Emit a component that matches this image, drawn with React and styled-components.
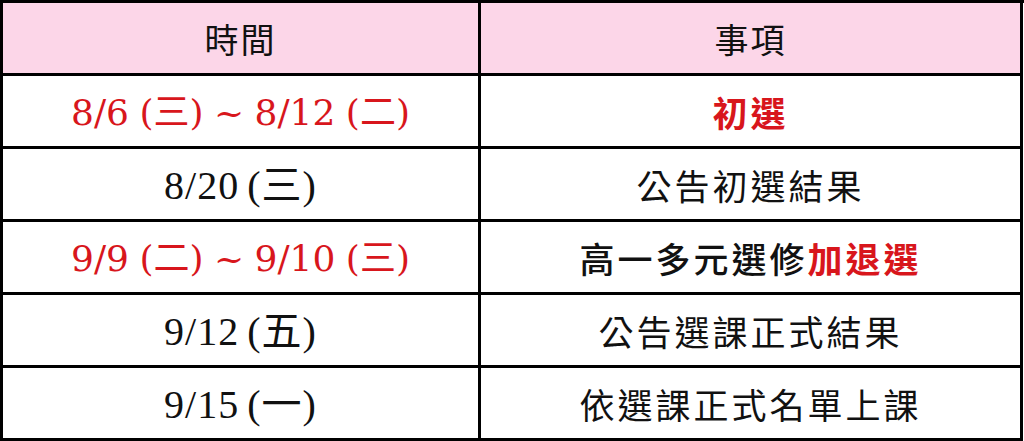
import React from "react";
import styled, { createGlobalStyle } from "styled-components";

const GlobalStyle = createGlobalStyle`
  html, body {
    margin: 0;
    padding: 0;
    background: #ffffff;
  }
`;

const Table = styled.div`
  width: 1023px;
  display: grid;
  grid-template-columns: 478px 542px;
  grid-auto-rows: 73px;
  border-top: 3px solid #000;
  border-left: 3px solid #000;
  background: #fff;
`;

const Cell = styled.div`
  display: flex;
  align-items: center;
  justify-content: center;
  border-right: 3px solid #000;
  border-bottom: 3px solid #000;
  background: ${(props) => (props.$head ? "#fcd6e8" : "#ffffff")};
  white-space: nowrap;
`;

const HeadText = styled.span`
  font-family: "Noto Sans CJK TC", "Noto Sans CJK SC", sans-serif;
  font-size: 34px;
  color: #111;
  letter-spacing: 2px;
`;

const DateText = styled.span`
  font-family: ${(props) =>
    props.$red
      ? `"DejaVu Serif", "Noto Sans CJK TC", serif`
      : `"Liberation Serif", "Noto Sans CJK TC", serif`};
  font-size: ${(props) => (props.$red ? "36px" : "40px")};
  color: ${(props) => (props.$red ? "#d8161c" : "#111")};
  letter-spacing: ${(props) => (props.$red ? "0" : "1px")};
  word-spacing: ${(props) => (props.$red ? "-1px" : "-3px")};
  margin-top: -4px;
`;

const ItemText = styled.span`
  font-family: "Noto Sans CJK TC", "Noto Sans CJK SC", sans-serif;
  font-size: 35px;
  letter-spacing: 3px;
  color: #111;
  font-weight: ${(props) => (props.$bold ? 500 : 400)};
`;

const Red = styled.span`
  color: #d8161c;
  font-weight: 700;
`;

const rows = [
  { date: "8/6 (三) ~ 8/12 (二)", red: true, item: <Red>初選</Red> },
  { date: "8/20 (三)", item: "公告初選結果" },
  {
    date: "9/9 (二) ~ 9/10 (三)",
    red: true,
    bold: true,
    item: (
      <>
        高一多元選修<Red>加退選</Red>
      </>
    ),
  },
  { date: "9/12 (五)", item: "公告選課正式結果" },
  { date: "9/15 (一)", item: "依選課正式名單上課" },
];

const App = () => {
  return (
    <>
      <GlobalStyle />
      <Table>
        <Cell $head>
          <HeadText>時間</HeadText>
        </Cell>
        <Cell $head>
          <HeadText>事項</HeadText>
        </Cell>
        {rows.map((row) => (
          <React.Fragment key={row.date}>
            <Cell>
              <DateText $red={row.red}>{row.date}</DateText>
            </Cell>
            <Cell>
              <ItemText $bold={row.bold}>{row.item}</ItemText>
            </Cell>
          </React.Fragment>
        ))}
      </Table>
    </>
  );
};

export default App;
